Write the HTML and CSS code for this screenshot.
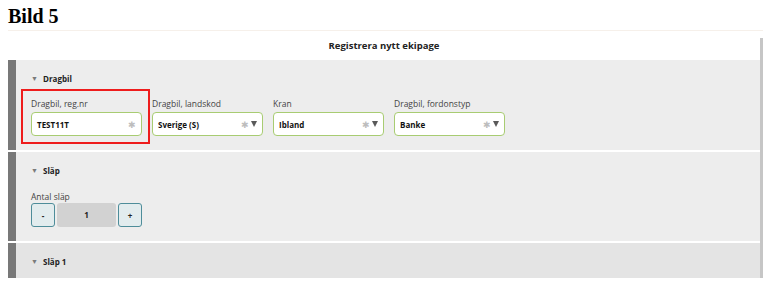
FILE: index.html
```html
<!DOCTYPE html>
<html lang="sv">
<head>
    <meta charset="UTF-8">
    <title>Bild 5</title>
    <link rel="stylesheet" href="styles.css">
</head>
<body>

<h1 class="bild-title">Bild 5</h1>

<div class="frame">
    <div class="page">
        <div class="page-header">Registrera nytt ekipage</div>

        <!-- Dragbil -->
        <div class="section">
            <div class="section-title"><span class="caret">▼</span>Dragbil</div>
            <div class="fields">
                <div class="field marked">
                    <label>Dragbil, reg.nr</label>
                    <div class="input">
                        <span class="value">TEST11T</span>
                        <span class="req">✱</span>
                    </div>
                    <span class="red-box"></span>
                </div>
                <div class="field">
                    <label>Dragbil, landskod</label>
                    <div class="input">
                        <span class="value">Sverige (S)</span>
                        <span class="req">✱</span><span class="arrow"></span>
                    </div>
                </div>
                <div class="field">
                    <label>Kran</label>
                    <div class="input">
                        <span class="value">Ibland</span>
                        <span class="req">✱</span><span class="arrow"></span>
                    </div>
                </div>
                <div class="field">
                    <label>Dragbil, fordonstyp</label>
                    <div class="input">
                        <span class="value">Banke</span>
                        <span class="req">✱</span><span class="arrow"></span>
                    </div>
                </div>
            </div>
        </div>

        <!-- Släp -->
        <div class="section">
            <div class="section-title"><span class="caret">▼</span>Släp</div>
            <div class="counter-label">Antal släp</div>
            <div class="counter">
                <button class="step">-</button>
                <div class="count">1</div>
                <button class="step">+</button>
            </div>
        </div>

        <!-- Släp 1 -->
        <div class="section dark">
            <div class="section-title"><span class="caret">▼</span>Släp 1</div>
        </div>
    </div>
    <div class="scrollbar"></div>
</div>

</body>
</html>
```

FILE: styles.css
```css
body {
    margin: 0;
    padding: 0 7px 0 8px;
    font-family: "Open Sans", Arial, sans-serif;
    background: #fff;
}
.bild-title {
    font-family: "Liberation Serif", serif;
    font-size: 20px;
    font-weight: bold;
    margin: 0;
    padding-top: 5px;
    height: 25px;
    line-height: 22px;
    border-bottom: 1px solid #f6f0ea;
}
.frame {
    display: flex;
}
.page {
    flex: 1;
}
.scrollbar {
    width: 3px;
    margin-top: 7px;
    background: #c6c6c6;
}
.page-header {
    height: 29px;
    line-height: 29px;
    text-align: center;
    font-size: 9.5px;
    font-weight: bold;
    color: #222;
}
.section {
    background: #ededed;
    border-left: 8px solid #787878;
    padding: 14px 15px 14px 15px;
}
.section + .section {
    margin-top: 2px;
}
.section.dark {
    background: #e4e4e4;
    padding-bottom: 11px;
}
.section-title {
    font-size: 8px;
    font-weight: bold;
    line-height: 10px;
    color: #222;
}
.caret {
    font-size: 7px;
    color: #7a7a7a;
    display: inline-block;
    width: 12px;
    vertical-align: 1px;
}
.fields {
    display: flex;
    gap: 10px;
    margin-top: 15px;
}
.field {
    width: 111px;
    position: relative;
}
.field label {
    display: block;
    font-size: 8.5px;
    line-height: 10px;
    color: #444;
    margin-bottom: 3px;
}
.input {
    height: 24px;
    box-sizing: border-box;
    border: 1.5px solid #a8cc72;
    border-radius: 4px;
    background: #fff;
    display: flex;
    align-items: center;
    padding: 0 5px;
}
.value {
    flex: 1;
    font-size: 8px;
    font-weight: bold;
    color: #111;
}
.req {
    font-size: 9px;
    color: #bdbdbd;
}
.arrow {
    width: 0;
    height: 0;
    margin-left: 2px;
    border-left: 3.5px solid transparent;
    border-right: 3.5px solid transparent;
    border-top: 6px solid #5a5a5a;
}
.red-box {
    position: absolute;
    left: -10px;
    right: -8px;
    top: -10px;
    bottom: -8px;
    border: 2px solid #ee1c1c;
}
.counter-label {
    margin-top: 16px;
    font-size: 8.5px;
    line-height: 10px;
    color: #444;
}
.counter {
    display: flex;
    gap: 2px;
    margin-top: 1px;
}
.step {
    width: 24px;
    height: 24px;
    padding: 0;
    border: 1.5px solid #4e8d9a;
    border-radius: 3px;
    background: #e2ecee;
    font-family: "Open Sans", Arial, sans-serif;
    font-size: 8px;
    font-weight: bold;
    color: #222;
}
.count {
    width: 59px;
    height: 24px;
    line-height: 24px;
    text-align: center;
    background: #d2d2d2;
    border-radius: 3px;
    font-size: 8px;
    font-weight: bold;
    color: #222;
}
```
